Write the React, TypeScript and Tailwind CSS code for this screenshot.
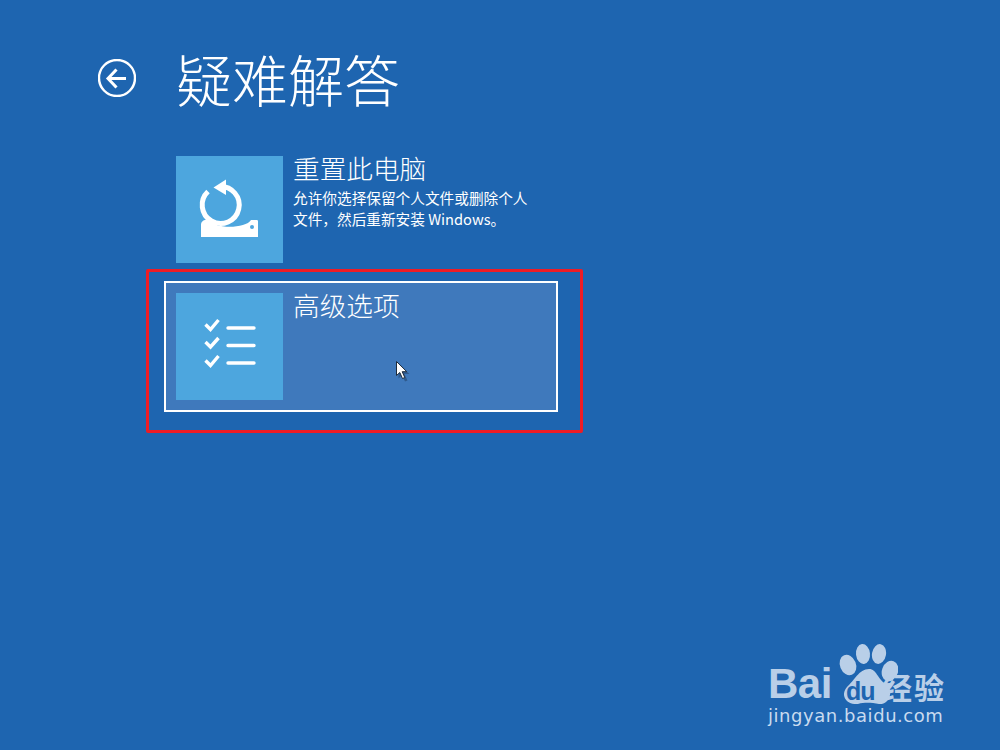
import React from 'react';

const font = { fontFamily: '"Noto Sans CJK SC", "Noto Sans", sans-serif' };

function BackIcon() {
  return (
    <svg width="38" height="38" viewBox="0 0 38 38" fill="none" stroke="white">
      <circle cx="19" cy="19" r="18" strokeWidth="2.4" />
      <path d="M10 19.5H28" strokeWidth="3" />
      <path d="M18.5 10.5L10 19.5L18.5 28.5" strokeWidth="3" />
    </svg>
  );
}

function ResetIcon() {
  return (
    <svg width="107" height="107" viewBox="0 0 107 107" fill="none">
      <path
        d="M32 35.5A18.5 18.5 0 1 0 43.5 30.5"
        stroke="white"
        strokeWidth="5"
      />
      <path d="M50 23.5V39L37.5 31.5Z" fill="white" />
      <path
        d="M30 64H33C37 73 70 73 75 64H81C82 64 82 65 82 66V81H25V69C25 66 27 64 30 64Z"
        fill="white"
      />
      <circle cx="76" cy="71" r="2" fill="#4da6de" />
    </svg>
  );
}

function ChecklistIcon() {
  return (
    <svg width="107" height="107" viewBox="0 0 107 107" fill="none" stroke="white">
      <path d="M29.5 31.5L34.5 36.5L42.5 27" strokeWidth="3.4" />
      <path d="M29.5 49L34.5 54L42.5 45" strokeWidth="3.4" />
      <path d="M29.5 67.5L34.5 72.5L42.5 63" strokeWidth="3.4" />
      <path d="M52 35H78M52 52.5H78M52 70H78" strokeWidth="3.4" strokeLinecap="round" />
    </svg>
  );
}

function Cursor() {
  return (
    <svg className="absolute left-[395px] top-[360px]" width="16" height="22" viewBox="0 0 16 22">
      <path d="M2 3V17.5L5.5 14L8.5 20.5L11 19.5L8 13H13Z" fill="black" opacity="0.25" transform="translate(1.5 1)" />
      <path d="M1.5 1.5V15.5L4.8 12.5L7.5 18.5L9.8 17.5L7.2 11.7H11.8Z" fill="white" stroke="#1c2a3a" strokeWidth="1" />
    </svg>
  );
}

function Watermark() {
  return (
    <div className="absolute left-[768px] top-[643px] w-[180px] h-[84px] text-[#b9cfe8]">
      <div
        className="absolute left-0 top-[16px] text-[42px] leading-[50px] font-bold tracking-[-0.5px]"
        style={{ fontFamily: '"Liberation Sans", sans-serif' }}
      >
        Bai
      </div>
      <svg className="absolute left-[66px] top-0" width="64" height="64" viewBox="0 0 64 64" fill="#b9cfe8">
        <ellipse cx="14" cy="22" rx="8" ry="10.5" transform="rotate(-22 14 22)" />
        <ellipse cx="29" cy="11" rx="7" ry="10" transform="rotate(-6 29 11)" />
        <ellipse cx="45" cy="11" rx="7" ry="10" transform="rotate(10 45 11)" />
        <ellipse cx="56" cy="28" rx="8" ry="10.5" transform="rotate(20 56 28)" />
        <path d="M35 26C43 26 43 36 52 41C60 47 56 62 45 61C38 60 32 59 24 61C12 62 6 52 13 44C20 38 25 26 35 26Z" />
      </svg>
      <div
        className="absolute left-[78px] top-[34px] text-[#1e65b0] text-[25px] leading-[28px] font-bold tracking-[-1px]"
        style={{ fontFamily: '"Liberation Sans", sans-serif' }}
      >
        du
      </div>
      <div className="absolute left-[114px] top-[24px] text-[30px] leading-[38px] font-bold tracking-[2px] whitespace-nowrap" style={font}>
        经验
      </div>
      <div
        className="absolute left-0 top-[61px] text-[20px] leading-[24px] text-[#c9dbef] whitespace-nowrap tracking-[0.55px]"
        style={{ fontFamily: '"DejaVu Sans", sans-serif', fontSize: 18 }}
      >
        jingyan.baidu.com
      </div>
    </div>
  );
}

export default function App() {
  return (
    <div className="relative w-[1000px] h-[750px] overflow-hidden bg-[#1e65b0] text-white" style={font}>
      {/* Header */}
      <div className="flex items-center gap-[40px] pl-[98px] pt-[40px] h-[156px] items-start">
        <div className="mt-[19px]">
          <BackIcon />
        </div>
        <h1 className="text-[56px] leading-[76px] font-light whitespace-nowrap">疑难解答</h1>
      </div>

      <div className="pl-[146px]">
        {/* Reset tile */}
        <div className="flex gap-[10px] ml-[30px] h-[107px]">
          <div className="w-[107px] h-[107px] bg-[#4da6de]">
            <ResetIcon />
          </div>
          <div>
            <div className="text-[26.67px] leading-[24px] font-light">重置此电脑</div>
            <div className="mt-[7px] w-[240px] text-[14.67px] leading-[21px]">
              允许你选择保留个人文件或删除个人文件，然后重新安装 Windows。
            </div>
          </div>
        </div>

        {/* Highlighted tile */}
        <div className="mt-[6px] w-[437px] h-[164px] border-[3px] border-[#ee1c25] rounded-[2px] pl-[15px] pt-[9px]">
          <div className="flex gap-[10px] w-[394px] h-[131px] border-2 border-white bg-[#3f79bc] p-[10px]">
            <div className="w-[107px] h-[107px] bg-[#4da6de]">
              <ChecklistIcon />
            </div>
            <div className="text-[26.67px] leading-[24px] font-light">高级选项</div>
          </div>
        </div>
      </div>

      <Cursor />
      <Watermark />
    </div>
  );
}
